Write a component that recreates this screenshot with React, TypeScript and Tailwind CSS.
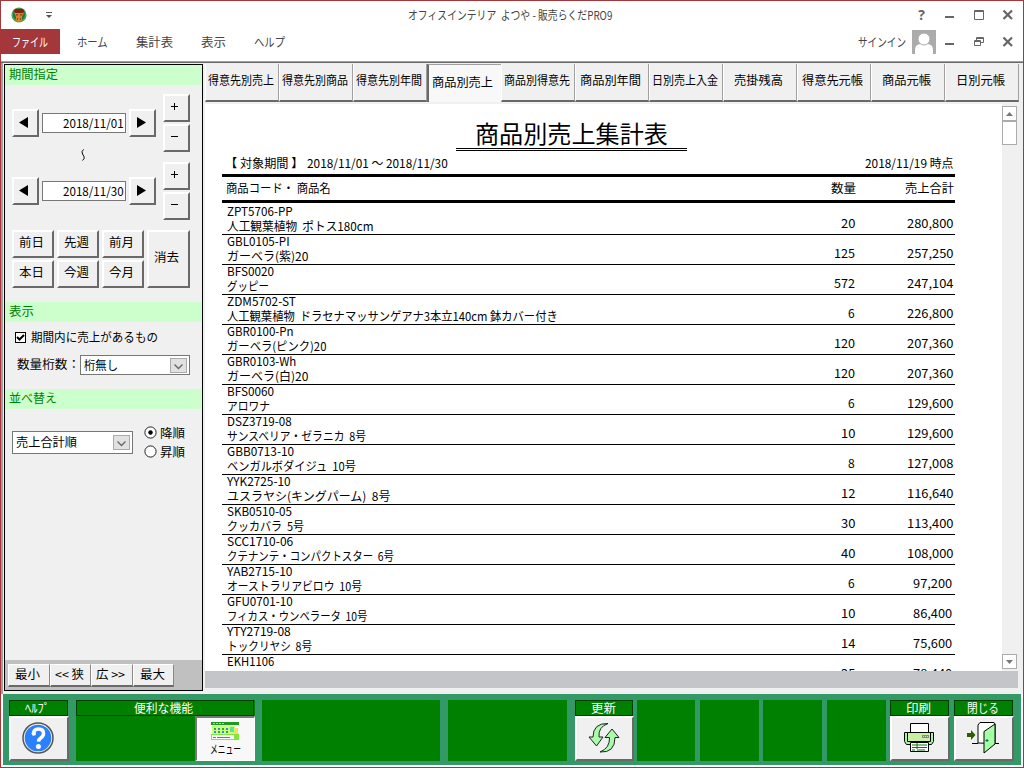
import { useLayoutEffect, useRef, useState } from "react";
import type { ReactNode } from "react";
import clsx from "clsx";

// proportional gothic label squeezed to a fixed width
const Label = ({ w, children, className }: { w: number; children: string; className?: string }) => {
  const ref = useRef<HTMLSpanElement>(null);
  const [scale, setScale] = useState(1);

  useLayoutEffect(() => {
    if (ref.current && ref.current.offsetWidth) {
      setScale(w / ref.current.offsetWidth);
    }
  }, [w, children]);

  return (
    <span className={clsx("block shrink-0 whitespace-pre", className)} style={{ width: w }}>
      <span ref={ref} className="inline-block origin-left" style={{ transform: `scaleX(${scale})` }}>
        {children}
      </span>
    </span>
  );
};

const raised =
  "flex items-center justify-center bg-[#f0f0f0] border-t-2 border-l-2 border-t-white border-l-white border-b-2 border-r-2 border-b-[#696969] border-r-[#696969]";

const tabs = [
  { name: "得意先別売上", w: 66 },
  { name: "得意先別商品", w: 66 },
  { name: "得意先別年間", w: 66 },
  { name: "商品別売上", w: 61, active: true },
  { name: "商品別得意先", w: 66 },
  { name: "商品別年間", w: 61 },
  { name: "日別売上入金", w: 66 },
  { name: "売掛残高", w: 49 },
  { name: "得意先元帳", w: 61 },
  { name: "商品元帳", w: 49 },
  { name: "日別元帳", w: 49 },
];

const rows = [
  { code: "ZPT5706-PP", cw: 66, name: "人工観葉植物  ポトス180cm", w: 147, qty: "20", total: "280,800" },
  { code: "GBL0105-PI", cw: 63, name: "ガーベラ(紫)20", w: 81, qty: "125", total: "257,250" },
  { code: "BFS0020", cw: 47, name: "グッピー", w: 42, qty: "572", total: "247,104" },
  { code: "ZDM5702-ST", cw: 69, name: "人工観葉植物  ドラセナマッサンゲアナ3本立140cm 鉢カバー付き", w: 331, qty: "6", total: "226,800" },
  { code: "GBR0100-Pn", cw: 67, name: "ガーベラ(ピンク)20", w: 99, qty: "120", total: "207,360" },
  { code: "GBR0103-Wh", cw: 69, name: "ガーベラ(白)20", w: 81, qty: "120", total: "207,360" },
  { code: "BFS0060", cw: 47, name: "アロワナ", w: 43, qty: "6", total: "129,600" },
  { code: "DSZ3719-08", cw: 65, name: "サンスベリア・ゼラニカ  8号", w: 139, qty: "10", total: "129,600" },
  { code: "GBB0713-10", cw: 67, name: "ベンガルボダイジュ  10号", w: 129, qty: "8", total: "127,008" },
  { code: "YYK2725-10", cw: 64, name: "ユスラヤシ(キングパーム)  8号", w: 163, qty: "12", total: "116,640" },
  { code: "SKB0510-05", cw: 65, name: "クッカバラ  5号", w: 77, qty: "30", total: "113,400" },
  { code: "SCC1710-06", cw: 66, name: "クテナンテ・コンパクトスター  6号", w: 167, qty: "40", total: "108,000" },
  { code: "YAB2715-10", cw: 66, name: "オーストラリアビロウ  10号", w: 135, qty: "6", total: "97,200" },
  { code: "GFU0701-10", cw: 66, name: "フィカス・ウンベラータ  10号", w: 140, qty: "10", total: "86,400" },
  { code: "YTY2719-08", cw: 64, name: "トックリヤシ  8号", w: 85, qty: "14", total: "75,600" },
  { code: "EKH1106", cw: 47, name: "", w: 0, qty: "25", total: "78,440" },
];

const CamelLogo = () => (
  <svg className="ml-[10px] h-4 w-4" viewBox="0 0 16 16">
    <circle cx="8" cy="8" r="7.6" fill="#4da05a" />
    <circle cx="8" cy="7.5" r="6" fill="#1d7a35" />
    <path d="M2.500 4.500 4 2h8l1.500 2.500-2 1.500h-7z" fill="#8c1d14" />
    <path d="M3 5.500l2 .5h6l2-.5-1.500 3-.5 2v3L8 15l-3-1.500v-3l-.5-2z" fill="#d9822b" />
    <path d="M5.500 7h1v1.500h-1zM9.500 7h1v1.500h-1zM6 11.500h1v1H6zM9 11.500h1v1H9z" fill="#3a1a08" />
  </svg>
);

const Minimize = () => (
  <svg className="h-3 w-3" viewBox="0 0 12 12">
    <path d="M1 7h9v2H1z" fill="#666" />
  </svg>
);

const Close = () => (
  <svg className="h-3 w-3" viewBox="0 0 12 12">
    <path d="M1.500 1.500l8.500 8.500M10 1.500L1.500 10" stroke="#666" strokeWidth="2.200" fill="none" />
  </svg>
);

const TitleBar = () => (
  <div className="relative flex h-7 items-center">
    <CamelLogo />
    <svg className="ml-[18px] h-2 w-2" viewBox="0 0 8 8">
      <path d="M1 1h6v1H1zM1 4h6L4 7z" fill="#555" />
    </svg>
    <div className="absolute inset-x-0 flex justify-center pr-1 text-[#444]">
      <Label w={204}>オフィスインテリア  よつや - 販売らくだPRO9</Label>
    </div>
    <div className="ml-auto flex items-center pr-[9px]">
      <span className="mr-[19px] font-['Open_Sans',sans-serif] text-[14px] font-bold text-[#666]">?</span>
      <Minimize />
      <svg className="ml-[17px] h-3 w-3" viewBox="0 0 12 12">
        <path d="M1.500 1.500h9v9h-9zM1 2.500h10" stroke="#666" fill="none" />
      </svg>
      <span className="ml-[17px]">
        <Close />
      </span>
    </div>
  </div>
);

const MenuBar = () => (
  <div className="flex h-[25px] items-center text-[#444]">
    <div className="-ml-px flex h-full w-[60px] items-center justify-center bg-[#a4373a] text-white">
      <Label w={36}>ファイル</Label>
    </div>
    <Label w={31} className="ml-[17px]">ホーム</Label>
    <Label w={37} className="ml-[28px]">集計表</Label>
    <Label w={25} className="ml-[28px]">表示</Label>
    <Label w={31} className="ml-[28px]">ヘルプ</Label>
    <div className="ml-auto flex items-center pr-[9px]">
      <Label w={48} className="mr-[6px]">サインイン</Label>
      <svg className="mr-[8px] h-6 w-6" viewBox="0 0 24 24">
        <path d="M0 0h24v24H0z" fill="#ababab" />
        <path d="M3 24v-4q0-6 6-6h6q6 0 6 6v4z" fill="#fff" />
        <circle cx="12" cy="9" r="6" fill="#fff" stroke="#ababab" />
      </svg>
      <Minimize />
      <svg className="ml-[17px] h-3 w-3" viewBox="0 0 12 12">
        <path d="M3.500 4V1.500h7v5H8M3 2.500h8M1.500 4.500h6v5h-6zM1 5.500h7" stroke="#666" fill="none" />
      </svg>
      <span className="ml-[17px]">
        <Close />
      </span>
    </div>
  </div>
);

const SectionTitle = ({ w, children }: { w: number; children: string }) => (
  <div className="flex h-5 shrink-0 items-center bg-[#ccffcc] pb-[3px] pl-1 text-[#008000]">
    <Label w={w}>{children}</Label>
  </div>
);

const DateRow = ({ date }: { date: string }) => (
  <div className="flex h-[58px] items-center">
    <button className={clsx(raised, "h-7 w-[27px]")}>
      <svg className="mr-[3px] mb-px h-[11px] w-[10px]" viewBox="0 0 10 11">
        <path d="M0 5.500 9 0v11z" />
      </svg>
    </button>
    <div className="ml-[3px] flex h-5 w-[84px] items-center justify-end border border-[#777] bg-white pb-px pr-px">
      <Label w={61}>{date}</Label>
    </div>
    <button className={clsx(raised, "ml-[3px] h-7 w-[27px]")}>
      <svg className="mr-[3px] mb-px h-[11px] w-[10px]" viewBox="0 0 10 11">
        <path d="M10 5.500 1 0v11z" />
      </svg>
    </button>
    <div className="ml-[7px] flex flex-col gap-[2px]">
      <button className={clsx(raised, "h-7 w-[27px] pr-1 pb-[3px]")}>
        <svg className="h-[7px] w-[7px]" viewBox="0 0 7 7">
          <path d="M3.500 0v7M0 3.500h7" stroke="#000" />
        </svg>
      </button>
      <button className={clsx(raised, "h-7 w-[27px] pr-1 pb-[3px]")}>
        <svg className="h-[7px] w-[7px]" viewBox="0 0 7 7">
          <path d="M0 3.500h7" stroke="#000" />
        </svg>
      </button>
    </div>
  </div>
);

const Select = ({ w, children, className }: { w: number; children: string; className: string }) => (
  <div className={clsx("flex items-center border border-[#777] bg-white pl-[3px] pr-[2px]", className)}>
    <Label w={w} className="pb-px">{children}</Label>
    <div className="ml-auto flex h-[15px] w-[17px] items-center justify-center border border-[#aaa] bg-[#e1e1e1]">
      <svg className="mt-[3px] h-[6px] w-[9px]" viewBox="0 0 9 6">
        <path d="M.5.5l4 4 4-4" stroke="#666" strokeWidth="1.300" fill="none" />
      </svg>
    </div>
  </div>
);

const Radio = ({ label, checked }: { label: string; checked?: boolean }) => (
  <div className="flex h-[19px] items-center">
    <svg className="h-[13px] w-[13px]" viewBox="0 0 13 13">
      <circle cx="6.500" cy="6.500" r="5.600" fill="#fff" stroke="#222" />
      {checked && <circle cx="6.500" cy="6.500" r="2.200" />}
    </svg>
    <Label w={25} className="ml-[3px]">{label}</Label>
  </div>
);

const Sidebar = () => (
  <div className="flex h-[627px] w-[199px] shrink-0 flex-col border border-black bg-[#f0f0f0]">
    <SectionTitle w={49}>期間指定</SectionTitle>
    <div className="mt-[9px] pl-[7px]">
      <DateRow date="2018/11/01" />
      <div className="flex h-[10px] items-center pl-[69px]">
        <svg className="mb-1 h-3 w-[5px]" viewBox="0 0 5 12">
          <path d="M2.500.5Q0 2.500 1.500 5L3 7.500Q4 9.500 1.500 11.500" stroke="#000" fill="none" />
        </svg>
      </div>
      <DateRow date="2018/11/30" />
    </div>
    <div className="mt-[10px] ml-[7px] flex h-[58px] gap-[3px]">
      <div className="grid grid-cols-3 gap-x-[3px] gap-y-[2px]">
        {["前日", "先週", "前月", "本日", "今週", "今月"].map((day) => (
          <button key={day} className={clsx(raised, "h-7 w-[42px] pr-1 pb-1")}>
            <Label w={25}>{day}</Label>
          </button>
        ))}
      </div>
      <button className={clsx(raised, "h-[58px] w-[43px] pr-1 pb-1")}>
        <Label w={25}>消去</Label>
      </button>
    </div>
    <div className="mt-[14px]">
      <SectionTitle w={25}>表示</SectionTitle>
    </div>
    <div className="mt-[5px] flex h-[21px] items-center pl-[10px]">
      <div className="h-[11px] w-[11px] border border-black bg-white">
        <svg className="h-[9px] w-[9px]" viewBox="0 0 9 9">
          <path d="M1 4l2.500 2.500L8 2" stroke="#000" strokeWidth="2" fill="none" />
        </svg>
      </div>
      <Label w={127} className="ml-[5px] pb-px">期間内に売上があるもの</Label>
    </div>
    <div className="mt-[7px] flex items-center pl-3">
      <Label w={63} className="pb-[2px]">数量桁数：</Label>
      <Select w={34} className="h-5 w-[110px]">桁無し</Select>
    </div>
    <div className="mt-[14px]">
      <SectionTitle w={48}>並べ替え</SectionTitle>
    </div>
    <div className="mt-[14px] flex items-center pl-[7px]">
      <Select w={61} className="h-[23px] w-[121px]">売上合計順</Select>
      <div className="ml-[11px]">
        <Radio label="降順" checked />
        <Radio label="昇順" />
      </div>
    </div>
    <div className="mt-auto flex h-[30px] bg-[#c0c0c0] pl-[3px] pt-1">
      {[
        { name: "最小", w: 25 },
        { name: "<< 狭", w: 29 },
        { name: "広 >>", w: 29 },
        { name: "最大", w: 25 },
      ].map((b) => (
        <button
          key={b.name}
          className="flex h-[23px] w-[41.5px] items-center justify-center border-t border-l border-r border-b-2 border-t-white border-l-white border-r-[#888] border-b-[#696969] bg-[#f0f0f0] pr-[3px] pb-[2px]"
        >
          <Label w={b.w}>{b.name}</Label>
        </button>
      ))}
    </div>
  </div>
);

const TabBar = () => (
  <div className="flex h-[38px] bg-[#f0f0f0]">
    {tabs.map((tab) => (
      <div
        key={tab.name}
        className={clsx(
          "flex w-[74px] shrink-0 items-center justify-center",
          tab.active
            ? "border-l-2 border-t border-l-[#696969] border-t-[#a0a0a0] bg-[#f8f8f8] pr-[5px] pb-1"
            : "border-l border-r border-b-2 border-l-white border-r-[#a0a0a0] border-b-[#696969] pr-[3px] pb-1"
        )}
      >
        <Label w={tab.w}>{tab.name}</Label>
      </div>
    ))}
  </div>
);

const Report = () => (
  <div className="h-[567px] w-[797px] overflow-hidden bg-white text-black">
    <div className="flex flex-col pl-[17px]">
      <div className="ml-[234px] mt-[16px] flex h-[31px] w-[231px] items-center justify-center border-b-[3px] border-double border-black pb-[2px] text-[24px]">
        <Label w={193}>商品別売上集計表</Label>
      </div>
      <div className="mt-[2px] flex h-[20px] w-[733px] items-center justify-between pb-px">
        <div className="flex items-center pl-[3px]">
          <Label w={78}>【 対象期間 】</Label>
          <Label w={141} className="ml-[4px]">2018/11/01 ～ 2018/11/30</Label>
        </div>
        <Label w={88} className="mr-[2px]">2018/11/19 時点</Label>
      </div>
      <div className="mt-px flex h-[29px] w-[733px] items-center border-t-[3px] border-b-[3px] border-black pb-px">
        <Label w={105} className="ml-1">商品コード・ 商品名</Label>
        <Label w={25} className="ml-auto">数量</Label>
        <Label w={49} className="ml-[49px] mr-px">売上合計</Label>
      </div>
      <div className="mt-[2px]">
        {rows.map((row) => (
          <div key={row.code} className="flex h-[30px] w-[733px] border-b border-black pl-[5px]">
            <div className="-mt-[2px] flex flex-col">
              <Label w={row.cw} className="h-[15px] leading-[15px]">{row.code}</Label>
              <Label w={row.w} className="h-[15px] leading-[15px]">{row.name}</Label>
            </div>
            <div className="ml-auto mt-[10px] flex h-4 items-center">
              <Label w={row.qty.length * 7}>{row.qty}</Label>
              <div className="flex w-[100px] justify-end pr-[2px]">
                <Label w={row.total.length * 6.6}>{row.total}</Label>
              </div>
            </div>
          </div>
        ))}
      </div>
    </div>
  </div>
);

const ScrollBar = () => (
  <div className="flex h-[567px] w-[16px] flex-col bg-[#f0f0f0] pt-[2px]">
    <div className="flex h-[15px] w-[15px] items-center justify-center border border-[#ababab] bg-white">
      <svg className="h-1 w-[7px]" viewBox="0 0 7 4">
        <path d="M0 4h7L3.500 0z" fill="#777" />
      </svg>
    </div>
    <div className="h-6 w-[15px] border border-[#ababab] bg-white" />
    <div className="mt-auto mb-[2px] flex h-[15px] w-[15px] items-center justify-center border border-[#ababab] bg-white">
      <svg className="h-1 w-[7px]" viewBox="0 0 7 4">
        <path d="M0 0h7L3.500 4z" fill="#777" />
      </svg>
    </div>
  </div>
);

const Tool = ({ w, title, children, className }: { w: number; title: string; children: ReactNode; className: string }) => (
  <div className={clsx("h-[61px] shrink-0 text-white", className)}>
    <div className="mr-px flex h-4 items-center justify-center border border-[#003c00] bg-[#008000] pb-px pr-[2px]">
      <Label w={w}>{title}</Label>
    </div>
    <button className={clsx(raised, "h-[45px] w-full pr-[2px] pb-[2px]")}>{children}</button>
  </div>
);

const HelpIcon = () => (
  <svg className="h-8 w-8" viewBox="0 0 32 32">
    <circle cx="16" cy="16" r="15" fill="#f4f4f4" stroke="#555" strokeWidth="1.500" />
    <circle cx="16" cy="16" r="13.300" fill="#2a80ff" />
    <path d="M11.500 12q0-5 5-5t5 4.500q0 2.500-2.500 4.200-2.300 1.500-2.500 4" stroke="#fff" strokeWidth="3.500" fill="none" />
    <circle cx="11.800" cy="11.500" r="2.200" fill="#fff" />
    <circle cx="16.400" cy="24.500" r="2.500" fill="#fff" />
  </svg>
);

const MenuIcon = () => (
  <svg className="h-[19px] w-[29px] shrink-0" viewBox="0 0 29 19" shapeRendering="crispEdges">
    <path d="M0 0h28v3H0z" fill="#1e9a1e" />
    <path d="M2 1h2v1H2zM5 1h2v1H5zM8 1h2v1H8zM11 1h2v1h-2z" fill="#8ef06a" />
    <path d="M1 4h23v8H1z" fill="#c8ff80" />
    <path d="M3 6h2v2H3zM11 6h2v2h-2zM7 9h2v2H7zM15 9h2v2h-2z" fill="#2ba84a" />
    <path d="M7 6h2v2H7zM15 6h2v2h-2zM3 9h2v2H3zM11 9h2v2h-2z" fill="#2d8be0" />
    <path d="M19 5h4v5h-4z" fill="#5de0a0" />
    <path d="M24 6h3v6h-4z" fill="#ffd966" />
    <path d="M0 12h28v6H0z" fill="#7bea3c" />
    <path d="M1 13h22v4H1z" fill="#fff" />
    <path d="M2 15h3v1H2zM6 15h13v1H6z" fill="#3a7fe0" />
  </svg>
);

const RefreshIcon = () => (
  <svg className="h-8 w-8" viewBox="0 0 32 32">
    <g fill="#a9fba9" stroke="#222" strokeWidth="1">
      <path d="M20 1.500Q5 1 5 15H1l7.500 9L15 15h-4Q10 5 20 1.500z" />
      <path d="M12 30q15 1 15-14.500h4L24 7l-7 8.500h4.500Q22 26 12 30z" />
    </g>
  </svg>
);

const PrinterIcon = () => (
  <svg className="h-[30px] w-8" viewBox="0 0 32 30">
    <g stroke="#000">
      <path d="M7.500.5h18v10h-18z" fill="#fff" />
      <path d="M1.500 9.500h29v9l-2 3h-25l-2-3z" fill="#a5f5a5" />
      <path d="M4.500 9.500h23v9h-23z" fill="#c8f0a0" />
      <path d="M7.500 19.500h18v9h-18z" fill="#fff" />
    </g>
    <path d="M19 12h7v3h-7z" fill="#888" />
    <path d="M20 13h1v1h-1zM22 13h1v1h-1zM24 13h1v1h-1z" fill="#fd6" />
    <path d="M9 22h15M9 24.500h15M9 27h3M14 27h8M14 20v6" stroke="#087a08" fill="none" />
  </svg>
);

const DoorIcon = () => (
  <svg className="h-8 w-8" viewBox="0 0 32 32">
    <path d="M0 11h4V8l4.500 5L4 18v-3H0z" fill="#2f5d00" />
    <path d="M5 21.500h6M28 21.500h4" stroke="#000" fill="none" />
    <path d="M11 21V3l2-2.500h14l1 1.500v19.500z" fill="#fff" stroke="#000" />
    <path d="M17 9.500 28 2v20L17 31z" fill="#a5ffa5" stroke="#000" />
    <path d="M20 17v3M18.500 18.500h3" stroke="#065" />
  </svg>
);

const Panel = ({ className }: { className: string }) => <div className={clsx("h-[61px] shrink-0 bg-[#008000]", className)} />;

const BottomBar = () => (
  <div className="ml-[2px] mr-[2px] flex h-[71px] shrink-0 items-start bg-[#339966] pl-[6px] pt-[6px]">
    <Tool title="ﾍﾙﾌﾟ" w={25} className="w-[60px]">
      <HelpIcon />
    </Tool>
    <div className="ml-[7px] h-[61px] w-[179px] shrink-0 bg-[#008000] text-white">
      <div className="mr-px flex h-4 items-center justify-center border border-[#003c00] pr-[3px] pb-px">
        <Label w={59}>便利な機能</Label>
      </div>
      <button className="ml-auto flex h-[45px] w-[60px] flex-col items-center justify-center border-t-2 border-l-2 border-r border-b border-t-[#777] border-l-[#777] border-white bg-[#f8f8f8] text-black">
        <MenuIcon />
        <Label w={31} className="h-[15px] leading-[15px]">メニュー</Label>
      </button>
    </div>
    <Panel className="ml-[7px] w-[178px]" />
    <Panel className="ml-[8px] w-[119px]" />
    <Tool title="更新" w={25} className="ml-[8px] w-[59px]">
      <RefreshIcon />
    </Tool>
    <Panel className="ml-[3px] w-[58px]" />
    <Panel className="ml-[5px] w-[59px]" />
    <Panel className="ml-[4px] w-[59px]" />
    <Panel className="ml-[5px] w-[59px]" />
    <Tool title="印刷" w={25} className="ml-[4px] w-[60px]">
      <PrinterIcon />
    </Tool>
    <Tool title="閉じる" w={32} className="ml-[4px] w-[60px]">
      <DoorIcon />
    </Tool>
  </div>
);

const App = () => {
  return (
    <div className="flex h-[768px] w-[1024px] flex-col overflow-hidden border border-[#a4373a] bg-white font-['Noto_Sans_CJK_JP',sans-serif] text-[12px] leading-none text-black">
      <TitleBar />
      <MenuBar />
      <div className="mt-[7px] flex h-[2px] shrink-0 flex-col border-t border-[#a0a0a0] bg-[#696969]" />
      <div className="flex h-[631px] shrink-0 border-l-2 border-[#a0a0a0] bg-[#f0f0f0] pl-px pt-px">
        <Sidebar />
        <div className="ml-[2px] w-[813px] shrink-0">
          <TabBar />
          <div className="mt-[2px] flex">
            <Report />
            <ScrollBar />
          </div>
          <div className="h-[17px] bg-[#c4c5c9]" />
        </div>
      </div>
      <BottomBar />
    </div>
  );
};

export default App;
